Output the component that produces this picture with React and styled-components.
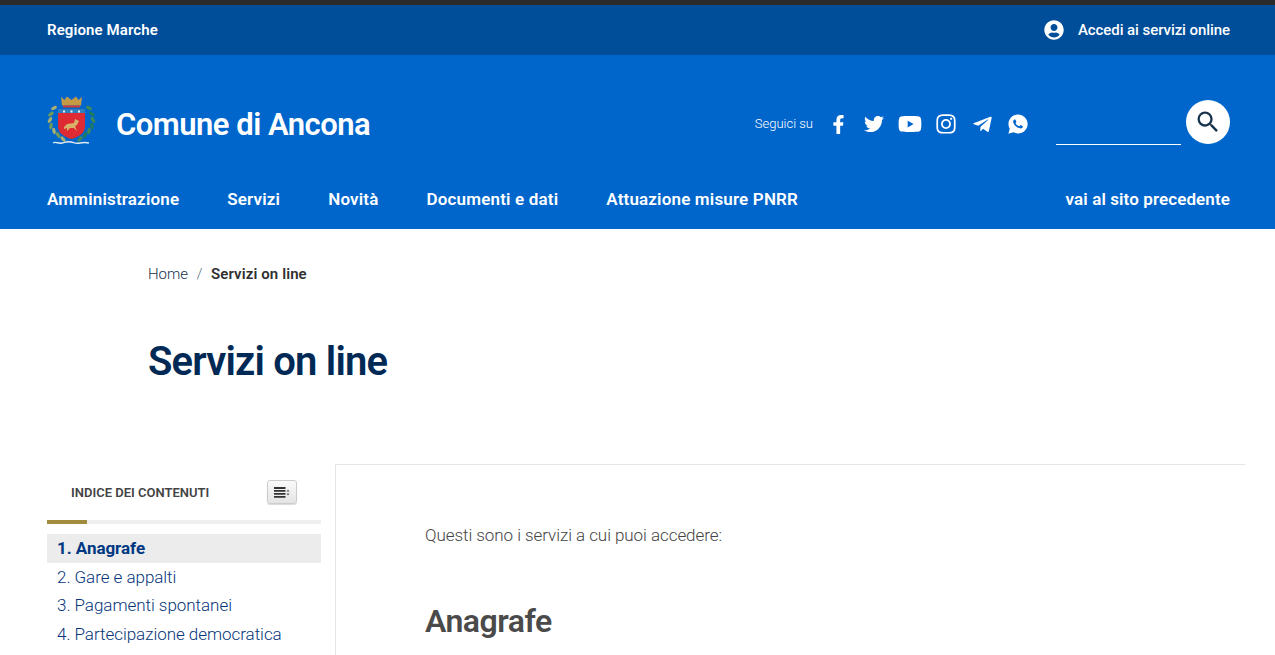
import styled, { createGlobalStyle } from "styled-components";
import { FaFacebookF, FaTwitter, FaYoutube, FaInstagram, FaTelegramPlane, FaUserCircle } from "react-icons/fa";
import { MdSearch } from "react-icons/md";

const GlobalStyle = createGlobalStyle`
  html, body {
    margin: 0;
    background: #fff;
    font-family: "Roboto", "Liberation Sans", sans-serif;
  }
  a { color: inherit; text-decoration: none; }
`;

const TopStrip = styled.div`
  height: 5px;
  background: #2b2b2b;
`;

const SlimHeader = styled.div`
  height: 50px;
  padding: 0 45px 0 47px;
  background: #004d99;
  display: flex;
  align-items: center;
  justify-content: space-between;
  color: #fff;
  font-size: 15px;
  font-weight: 600;
  letter-spacing: 0.1px;
`;

const Login = styled.a`
  display: flex;
  align-items: center;
  gap: 14px;
  font-weight: 500;
  letter-spacing: -0.07px;
`;

const CenterHeader = styled.div`
  height: 117px;
  padding: 17px 45px 0 47px;
  box-sizing: border-box;
  background: #0066cc;
  display: flex;
  align-items: center;
  justify-content: space-between;
  color: #fff;
`;

const Brand = styled.a`
  display: flex;
  align-items: center;
  gap: 20px;
`;

const BrandName = styled.span`
  font-size: 31px;
  font-weight: 600;
  letter-spacing: -0.5px;
  margin-top: 5px;
`;

const Tools = styled.div`
  display: flex;
  align-items: center;
`;

const Follow = styled.span`
  font-size: 13px;
  font-weight: 300;
  margin: 2px 7px 0 0;
`;

const Socials = styled.div`
  display: flex;
  align-items: center;
  margin-right: 20px;
  padding-top: 4px;
`;

const Social = styled.a`
  width: 36px;
  height: 22px;
  display: flex;
  align-items: center;
  justify-content: center;
`;

const Search = styled.div`
  display: flex;
  align-items: center;
  gap: 5px;
`;

const SearchInput = styled.div`
  width: 125px;
  height: 44px;
  border-bottom: 1px solid #fff;
  box-sizing: border-box;
  margin-top: 1px;
`;

const SearchButton = styled.div`
  width: 44px;
  height: 44px;
  border-radius: 50%;
  background: #fff;
  color: #17324d;
  display: flex;
  align-items: center;
  justify-content: center;
`;

const Nav = styled.nav`
  height: 57px;
  padding: 0 45px 4px 47px;
  box-sizing: border-box;
  background: #0066cc;
  display: flex;
  align-items: center;
  justify-content: space-between;
  color: #fff;
  font-size: 17px;
  font-weight: 600;
  letter-spacing: 0.1px;
`;

const NavList = styled.div`
  display: flex;
  gap: 48px;
  letter-spacing: 0.17px;
`;

const Crumbs = styled.div`
  margin: 36px 0 0 148px;
  height: 18px;
  display: flex;
  align-items: center;
  font-size: 15px;
  color: #17324d;
  font-weight: 300;
`;

const CrumbSep = styled.span`
  margin: 0 8.500px;
  color: #5c6f82;
`;

const CrumbNow = styled.strong`
  color: #303030;
  font-weight: 600;
  letter-spacing: 0.1px;
`;

const PageTitle = styled.h1`
  margin: 55px 0 0 148px;
  font-size: 40px;
  line-height: 48px;
  font-weight: 600;
  color: #002a55;
  letter-spacing: -0.8px;
`;

const Body = styled.div`
  margin: 78px 30px 0 47px;
  display: grid;
  grid-template-columns: 274px 1fr;
  column-gap: 14px;
`;

const Sidebar = styled.aside`
  display: flex;
  flex-direction: column;
`;

const IndexHead = styled.div`
  height: 56px;
  padding: 0 24px;
  display: flex;
  align-items: center;
  justify-content: space-between;
  font-size: 13px;
  font-weight: 600;
  color: #444;
`;

const TocButton = styled.div`
  width: 30px;
  height: 24px;
  box-sizing: border-box;
  border: 1px solid #ccc;
  border-radius: 3px;
  background: linear-gradient(#fafafa, #e4e4e4);
  box-shadow: 0 1px 1px rgba(0, 0, 0, 0.15);
  display: flex;
  align-items: center;
  justify-content: center;
`;

const Progress = styled.div`
  height: 4px;
  background: #efefef;
  margin-bottom: 10px;
`;

const ProgressFill = styled.div`
  width: 40px;
  height: 100%;
  background: #a08c3c;
`;

const IndexItem = styled.a`
  display: block;
  height: 28.67px;
  line-height: 28.67px;
  padding-left: 10px;
  font-size: 17px;
  letter-spacing: -0.04px;
  font-weight: ${({ $active }) => ($active ? "700" : "300")};
  color: ${({ $active }) => ($active ? "#003882" : "#06357a")};
  background: ${({ $active }) => ($active ? "#ececec" : "transparent")};
`;

const Content = styled.main`
  height: 191px;
  overflow: hidden;
  padding: 59px 0 0 89px;
  box-sizing: border-box;
  border-top: 1px solid #e6e6e6;
  border-left: 1px solid #e6e6e6;
`;

const Intro = styled.p`
  margin: 0;
  font-size: 17px;
  line-height: 22px;
  font-weight: 300;
  color: #444;
  letter-spacing: -0.06px;
`;

const SectionTitle = styled.h2`
  margin: 56px 0 0;
  font-size: 32px;
  line-height: 38px;
  font-weight: 600;
  color: #4a4a4a;
  letter-spacing: -0.5px;
`;

const leaves = [
  [7, 12, -25], [4, 18, -40], [3, 24, -60], [4, 30, -80], [7, 35, -100], [11, 39, -120], [16, 43, -130],
];

const Crest = () => (
  <svg width="49" height="52" viewBox="0 0 49 52" aria-hidden="true">
    {leaves.map(([x, y, r], i) => (
      <g key={i}>
        <ellipse cx={x} cy={y} rx="3.200" ry="1.700" fill={i % 2 ? "#6f9a5c" : "#a7ad73"} transform={`rotate(${r} ${x} ${y})`} />
        <ellipse cx={49 - x} cy={y} rx="3.200" ry="1.700" fill={i % 2 ? "#1f7a63" : "#3e8a55"} transform={`rotate(${-r} ${49 - x} ${y})`} />
      </g>
    ))}
    <path d="M14 1l3.500 3L20 .5 24.500 4 29 .5 31.500 4 35 1l-1 8.500H15z" fill="#c39b47" />
    <rect x="16" y="9.500" width="17" height="2" fill="#cf3b3b" />
    <path d="M11 13h27v5H11z" fill="#2d7fc0" />
    <path d="M11 17h27v13c0 7-6 11-13.500 13C17 41 11 37 11 30z" fill="#de2a33" />
    <path d="M17 31l3-3 7-1 1-4 4 2-2 4-2 1 2 5-3-3-4 0-3 3 0-3-3 1z" fill="#d9b26a" />
    <path d="M16 15.500h2M23.500 15.500h2M31 15.500h2" stroke="#eee" strokeWidth="2" />
    <path d="M6 47c3-2 5 1 9 0s5-2 9-1 5 2 9 1 5-1 9 0" fill="none" stroke="#dfe9f2" strokeWidth="1.400" />
  </svg>
);

const TocIcon = () => (
  <svg width="16" height="11" viewBox="0 0 16 11" aria-hidden="true">
    <path d="M0 1h11.500M0 3.900h11.500M0 6.900h11.500M0 9.900h11.500" stroke="#333" strokeWidth="1.800" />
    <path d="M12.500 4.500h3L14 2.500zM12.500 6.500h3L14 8.500z" fill="#555" />
  </svg>
);

// solid bubble with a cut out handset, the package icon is only an outline
const WhatsappSolid = () => (
  <svg width="22" height="22" viewBox="0 0 448 512" aria-hidden="true">
    <path d="M224 32C101 32 2 131 2 254c0 39 10 77 30 111L0 480l118-31c32 18 69 27 106 27 122 0 224-100 224-222S346 32 224 32z" fill="#fff" />
    <path
      d="M325.100 300.500c-5.500-2.800-32.800-16.200-37.900-18-5.100-1.900-8.800-2.800-12.500 2.800-3.700 5.600-14.300 18-17.600 21.800-3.200 3.700-6.500 4.200-12 1.400-32.600-16.300-54-29.100-75.500-66-5.700-9.800 5.700-9.100 16.300-30.300 1.800-3.700.9-6.900-.5-9.700-1.400-2.800-12.500-30.100-17.100-41.200-4.500-10.800-9.100-9.300-12.500-9.500-3.200-.2-6.900-.2-10.600-.2-3.700 0-9.700 1.400-14.800 6.900-5.100 5.600-19.400 19-19.400 46.300 0 27.300 19.900 53.700 22.600 57.400 2.800 3.700 39.100 59.700 94.800 83.800 35.200 15.200 49 16.500 66.600 13.900 10.700-1.600 32.800-13.400 37.400-26.400 4.600-13 4.600-24.100 3.200-26.400-1.300-2.500-5-3.900-10.500-6.600z"
      fill="#0066cc"
    />
  </svg>
);

const socials = [
  <FaFacebookF size={19} />,
  <FaTwitter size={20} />,
  <FaYoutube size={24} />,
  <FaInstagram size={22} />,
  <FaTelegramPlane size={21} />,
  <WhatsappSolid />,
];

const navItems = ["Amministrazione", "Servizi", "Novità", "Documenti e dati", "Attuazione misure PNRR"];
const indexItems = ["1. Anagrafe", "2. Gare e appalti", "3. Pagamenti spontanei", "4. Partecipazione democratica"];

const App = () => (
  <>
    <GlobalStyle />
    <TopStrip />
    <SlimHeader>
      <a>Regione Marche</a>
      <Login>
        <FaUserCircle size={20} />
        Accedi ai servizi online
      </Login>
    </SlimHeader>
    <CenterHeader>
      <Brand>
        <Crest />
        <BrandName>Comune di Ancona</BrandName>
      </Brand>
      <Tools>
        <Follow>Seguici su</Follow>
        <Socials>
          {socials.map((icon, i) => (
            <Social key={i}>{icon}</Social>
          ))}
        </Socials>
        <Search>
          <SearchInput />
          <SearchButton>
            <MdSearch size={28} />
          </SearchButton>
        </Search>
      </Tools>
    </CenterHeader>
    <Nav>
      <NavList>
        {navItems.map((item) => (
          <a key={item}>{item}</a>
        ))}
      </NavList>
      <a>vai al sito precedente</a>
    </Nav>
    <Crumbs>
      Home
      <CrumbSep>/</CrumbSep>
      <CrumbNow>Servizi on line</CrumbNow>
    </Crumbs>
    <PageTitle>Servizi on line</PageTitle>
    <Body>
      <Sidebar>
        <IndexHead>
          INDICE DEI CONTENUTI
          <TocButton>
            <TocIcon />
          </TocButton>
        </IndexHead>
        <Progress>
          <ProgressFill />
        </Progress>
        {indexItems.map((item, i) => (
          <IndexItem key={item} $active={i === 0}>
            {item}
          </IndexItem>
        ))}
      </Sidebar>
      <Content>
        <Intro>Questi sono i servizi a cui puoi accedere:</Intro>
        <SectionTitle>Anagrafe</SectionTitle>
      </Content>
    </Body>
  </>
);

export default App;
